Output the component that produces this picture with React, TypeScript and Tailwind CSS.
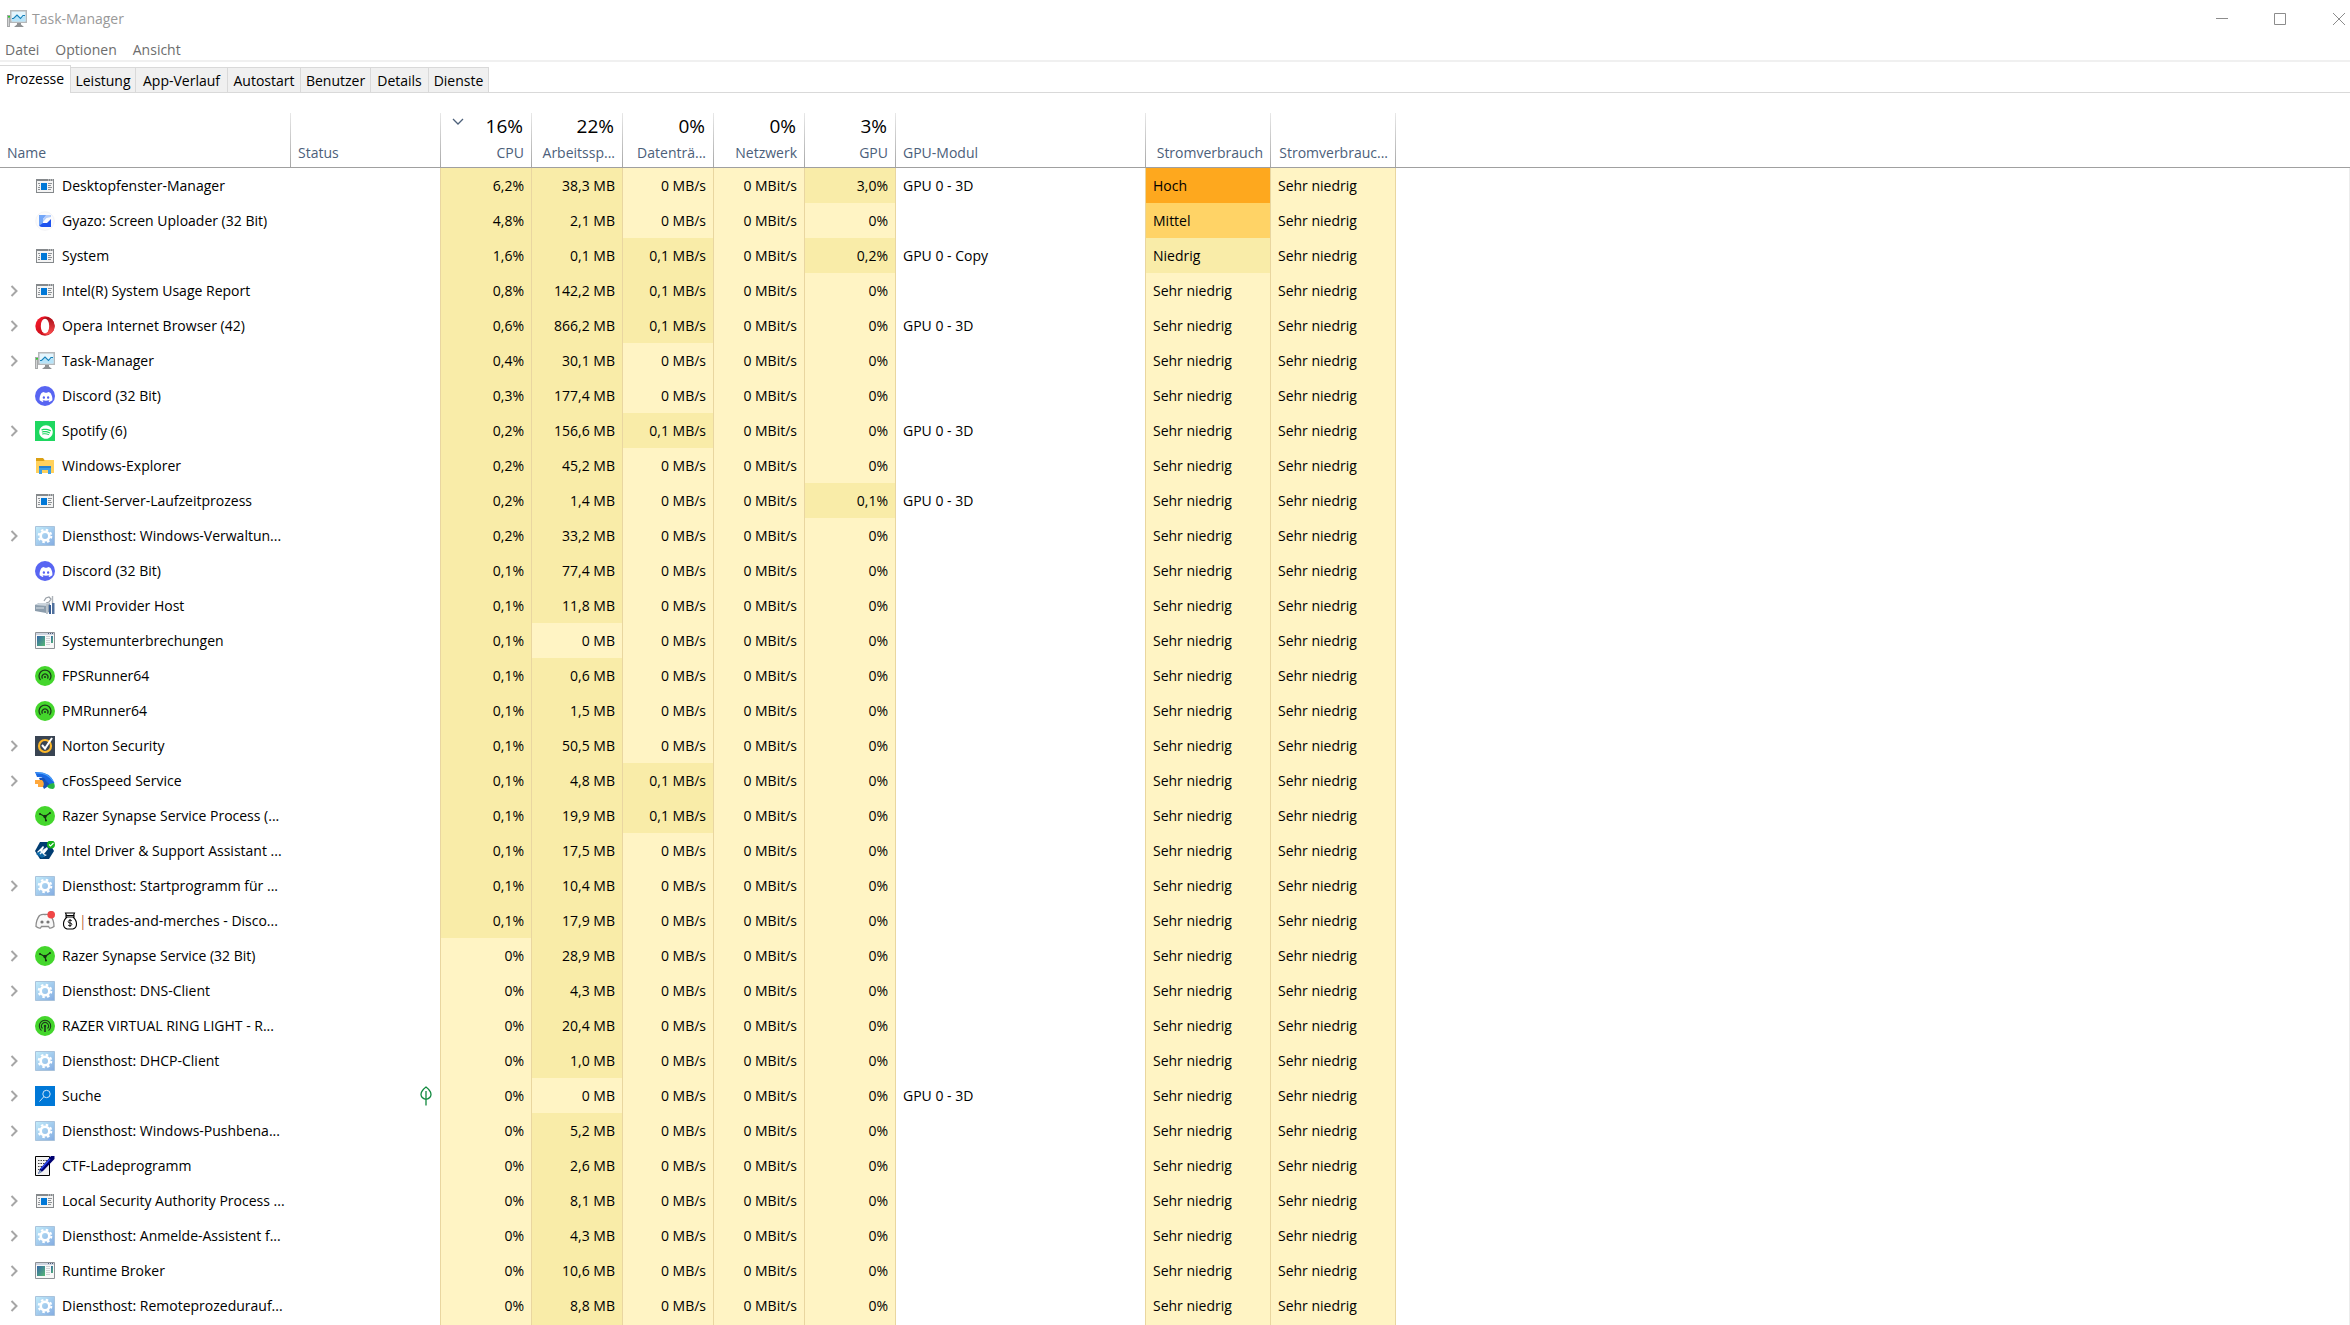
import type { ReactNode } from "react"
import { clsx } from "clsx"
import { FaDiscord, FaSpotify } from "react-icons/fa"

type IconName =
    | "window" | "gyazo" | "opera" | "taskmgr" | "discord" | "spotify" | "explorer" | "service" | "wmi"
    | "program" | "runner" | "norton" | "cfos" | "razer" | "intel" | "discordTray" | "ring" | "search" | "ctf"

type Process = {
    icon: IconName
    name: string
    cpu: string
    memory: string
    disk?: string
    gpu?: string
    engine?: string
    power?: string
    expandable?: boolean
    suspended?: boolean
    moneyBag?: boolean
}

const menus = ["Datei", "Optionen", "Ansicht"]

const tabs = [
    { label: "Leistung", width: "w-[65px]" },
    { label: "App-Verlauf", width: "w-[92px]" },
    { label: "Autostart", width: "w-[73px]" },
    { label: "Benutzer", width: "w-[70px]" },
    { label: "Details", width: "w-[58px]" },
    { label: "Dienste", width: "w-[60px]" },
]

const columns = [
    { label: "Name", width: "w-[291px]" },
    { label: "Status", width: "w-[150px]" },
    { label: "CPU", total: "16%", width: "w-[91px]", right: true, sorted: true },
    { label: "Arbeitssp...", total: "22%", width: "w-[91px]", right: true },
    { label: "Datenträ...", total: "0%", width: "w-[91px]", right: true },
    { label: "Netzwerk", total: "0%", width: "w-[91px]", right: true },
    { label: "GPU", total: "3%", width: "w-[91px]", right: true },
    { label: "GPU-Modul", width: "w-[250px]" },
    { label: "Stromverbrauch", width: "w-[125px]", right: true },
    { label: "Stromverbrauc...", width: "w-[125px]", right: true },
]

const processes: Process[] = [
    { icon: "window", name: "Desktopfenster-Manager", cpu: "6,2%", memory: "38,3 MB", gpu: "3,0%", engine: "GPU 0 - 3D", power: "Hoch" },
    { icon: "gyazo", name: "Gyazo: Screen Uploader (32 Bit)", cpu: "4,8%", memory: "2,1 MB", power: "Mittel" },
    { icon: "window", name: "System", cpu: "1,6%", memory: "0,1 MB", disk: "0,1 MB/s", gpu: "0,2%", engine: "GPU 0 - Copy", power: "Niedrig" },
    { icon: "window", name: "Intel(R) System Usage Report", cpu: "0,8%", memory: "142,2 MB", disk: "0,1 MB/s", expandable: true },
    { icon: "opera", name: "Opera Internet Browser (42)", cpu: "0,6%", memory: "866,2 MB", disk: "0,1 MB/s", engine: "GPU 0 - 3D", expandable: true },
    { icon: "taskmgr", name: "Task-Manager", cpu: "0,4%", memory: "30,1 MB", expandable: true },
    { icon: "discord", name: "Discord (32 Bit)", cpu: "0,3%", memory: "177,4 MB" },
    { icon: "spotify", name: "Spotify (6)", cpu: "0,2%", memory: "156,6 MB", disk: "0,1 MB/s", engine: "GPU 0 - 3D", expandable: true },
    { icon: "explorer", name: "Windows-Explorer", cpu: "0,2%", memory: "45,2 MB" },
    { icon: "window", name: "Client-Server-Laufzeitprozess", cpu: "0,2%", memory: "1,4 MB", gpu: "0,1%", engine: "GPU 0 - 3D" },
    { icon: "service", name: "Diensthost: Windows-Verwaltun...", cpu: "0,2%", memory: "33,2 MB", expandable: true },
    { icon: "discord", name: "Discord (32 Bit)", cpu: "0,1%", memory: "77,4 MB" },
    { icon: "wmi", name: "WMI Provider Host", cpu: "0,1%", memory: "11,8 MB" },
    { icon: "program", name: "Systemunterbrechungen", cpu: "0,1%", memory: "0 MB" },
    { icon: "runner", name: "FPSRunner64", cpu: "0,1%", memory: "0,6 MB" },
    { icon: "runner", name: "PMRunner64", cpu: "0,1%", memory: "1,5 MB" },
    { icon: "norton", name: "Norton Security", cpu: "0,1%", memory: "50,5 MB", expandable: true },
    { icon: "cfos", name: "cFosSpeed Service", cpu: "0,1%", memory: "4,8 MB", disk: "0,1 MB/s", expandable: true },
    { icon: "razer", name: "Razer Synapse Service Process (...", cpu: "0,1%", memory: "19,9 MB", disk: "0,1 MB/s" },
    { icon: "intel", name: "Intel Driver & Support Assistant ...", cpu: "0,1%", memory: "17,5 MB" },
    { icon: "service", name: "Diensthost: Startprogramm für ...", cpu: "0,1%", memory: "10,4 MB", expandable: true },
    { icon: "discordTray", name: "trades-and-merches - Disco...", cpu: "0,1%", memory: "17,9 MB", moneyBag: true },
    { icon: "razer", name: "Razer Synapse Service (32 Bit)", cpu: "0%", memory: "28,9 MB", expandable: true },
    { icon: "service", name: "Diensthost: DNS-Client", cpu: "0%", memory: "4,3 MB", expandable: true },
    { icon: "ring", name: "RAZER VIRTUAL RING LIGHT - R...", cpu: "0%", memory: "20,4 MB" },
    { icon: "service", name: "Diensthost: DHCP-Client", cpu: "0%", memory: "1,0 MB", expandable: true },
    { icon: "search", name: "Suche", cpu: "0%", memory: "0 MB", engine: "GPU 0 - 3D", expandable: true, suspended: true },
    { icon: "service", name: "Diensthost: Windows-Pushbena...", cpu: "0%", memory: "5,2 MB", expandable: true },
    { icon: "ctf", name: "CTF-Ladeprogramm", cpu: "0%", memory: "2,6 MB" },
    { icon: "window", name: "Local Security Authority Process ...", cpu: "0%", memory: "8,1 MB", expandable: true },
    { icon: "service", name: "Diensthost: Anmelde-Assistent f...", cpu: "0%", memory: "4,3 MB", expandable: true },
    { icon: "program", name: "Runtime Broker", cpu: "0%", memory: "10,6 MB", expandable: true },
    { icon: "service", name: "Diensthost: Remoteprozedurauf...", cpu: "0%", memory: "8,8 MB", expandable: true },
]

const powerColors: Record<string, string> = {
    "Hoch": "bg-[#fea81e]",
    "Mittel": "bg-[#ffd366]",
    "Niedrig": "bg-[#f9eca8]",
    "Sehr niedrig": "bg-[#fff4c4]",
}

// values starting at zero get the pale tint
const heat = (value: string) => (/^0( |%)/.test(value) ? "bg-[#fff4c4]" : "bg-[#f9eca8]")

const iconDrawings: Record<IconName, ReactNode> = {
    window: (
        <>
            <path d="M1 3h18v14H1z" fill="#85898c" />
            <path d="M2 5h16v11H2z" fill="#f4f4f4" />
            <path d="M13 4h1M15 4h1M17 4h1" stroke="#e8e8e8" />
            <path d="M3 7.5h2M4 9.5h1M3 11.5h2M3 13.5h2M13 7.5h4M13 9.5h3M13 11.5h4M13 13.5h3" stroke="#8e9295" />
            <path d="M6 7h6v7H6z" fill="#0078d7" />
        </>
    ),
    gyazo: (
        <>
            <circle cx="10" cy="10" r="9.3" fill="#fbfbfc" stroke="#efeff2" strokeWidth=".7" />
            <path d="M4 4h7L8 7.500v4.500h4l4-4v8H7q-3 0-3-3z" fill="#1d52ee" />
            <path d="M4 4h7L8 7.500v4.500l-3.500 2.500Q4 14 4 13z" fill="#72a6f8" />
            <path d="M11 4h5v2l-4.500 1L8 11V7.500z" fill="#b4cdfb" />
        </>
    ),
    opera: (
        <>
            <defs>
                <linearGradient id="opera-red" x1="0" x2="1" y1="0" y2="1">
                    <stop offset="0" stopColor="#ff1b2d" />
                    <stop offset=".5" stopColor="#d5121f" />
                    <stop offset="1" stopColor="#b5101c" />
                </linearGradient>
                <linearGradient id="opera-side" x1="0" x2="0" y1="0" y2="1">
                    <stop offset="0" stopColor="#a50d18" />
                    <stop offset="1" stopColor="#ff5050" />
                </linearGradient>
            </defs>
            <circle cx="10" cy="10" r="9.700" fill="url(#opera-red)" />
            <path d="M7 3Q12-.5 16.500 3Q19.700 6 19.700 10T16.500 17Q12 20.500 7 17Q13 17 13.500 10T7 3z" fill="url(#opera-side)" />
            <ellipse cx="10" cy="10" rx="4.200" ry="7.300" fill="#fff" />
        </>
    ),
    taskmgr: (
        <>
            <path d="M0 6h3v12H0z" fill="#a6a8a9" />
            <path d="M1 7h2v1.500H1z" fill="#2fce2f" />
            <path d="M1 9h1v8H1z" fill="#d2d4d5" />
            <path d="M3 1h17v13H3z" fill="#b5b8ba" />
            <path d="M4.500 2.500h14v10h-14z" fill="#e3f5fd" />
            <path d="M5 10l2-1 3-3 3.500 3.500L18.500 6v6.500H5z" fill="#b7e3f8" />
            <path d="M5 9.500h1.500L10 6l3.500 3.500L16 6.500h2" fill="none" stroke="#1480bb" strokeWidth="1.100" />
            <path d="M10 14h4v1.500l3 2.500H7l3-2.500z" fill="#8f9294" />
        </>
    ),
    discord: (
        <>
            <circle cx="10" cy="10" r="10" fill="#5865f2" />
            <FaDiscord x="4" y="4" width="12" height="12" color="#fff" />
        </>
    ),
    spotify: (
        <>
            <path d="M0 0h20v20H0z" fill="#1ed760" />
            <FaSpotify x="4" y="4" width="12" height="12" color="#fff" />
        </>
    ),
    explorer: (
        <>
            <path d="M1 2h7l1.500 2H19v4H1z" fill="#dba012" />
            <path d="M1 5h7.500L10 4h9v13H1z" fill="#ffd15c" />
            <path d="M4 10h12v8h-3v-4H7v4H4z" fill="#3c9ee5" />
            <path d="M4 10h12v2H4z" fill="#2482d0" />
        </>
    ),
    service: (
        <>
            <defs>
                <linearGradient id="service-bg" x1="0" x2="1" y1="0" y2="1">
                    <stop offset="0" stopColor="#c3edfb" />
                    <stop offset="1" stopColor="#83abe1" />
                </linearGradient>
            </defs>
            <path d="M.5.5h19v19H.5z" fill="url(#service-bg)" stroke="#a9c3dc" />
            <circle cx="10" cy="10" r="4.300" fill="none" stroke="#fff" strokeWidth="2.600" />
            <circle cx="10" cy="10" r="6.300" fill="none" stroke="#fff" strokeWidth="2" strokeDasharray="2.500 2.448" />
        </>
    ),
    wmi: (
        <>
            <path d="M9 5l2-3 3-1 2 2-2 3-3 1" fill="none" stroke="#9aa1a8" strokeWidth="1.300" />
            <path d="M17.500 0v8" stroke="#adb3b9" strokeWidth="1.400" />
            <path d="M0 9l4-2h11v9l-4 1L0 15z" fill="#8c9dac" />
            <path d="M0 9l4-2h11l-3 3z" fill="#cbd4dc" />
            <path d="M1 12h8" stroke="#dbe2e8" />
            <path d="M11 8h2v10h-2z" fill="#b9c1c8" />
            <path d="M14 9h2v9h-2z" fill="#395e94" />
            <path d="M17 7h2.500v11H17z" fill="#50709d" />
        </>
    ),
    program: (
        <>
            <defs>
                <linearGradient id="program-fill" x1="0" x2="1" y1="0" y2="1">
                    <stop offset="0" stopColor="#3466a8" />
                    <stop offset="1" stopColor="#57b874" />
                </linearGradient>
            </defs>
            <path d="M.5 1.500h19v16H.5z" fill="#f8f8f8" stroke="#8d9196" />
            <path d="M1 2h18v2H1z" fill="#cfd5e0" />
            <path d="M13 2.500h1M15 2.500h1M17 2.500h1" stroke="#4c5b78" />
            <path d="M2 5h8v10H2z" fill="url(#program-fill)" />
            <path d="M11 5.500h4M11 7.500h4M11 9.500h4M11 11.500h4M11 13.500h4" stroke="#cfd1d4" />
            <path d="M16 5h2v7h-2z" fill="url(#program-fill)" />
        </>
    ),
    runner: (
        <>
            <circle cx="10" cy="10" r="10" fill="#44d62c" />
            <path d="M5.500 14A6 6 0 1 1 14.500 14" fill="none" stroke="#1c3a1a" strokeWidth="1.300" />
            <path d="M7.500 12.700A3 3 0 1 1 12.500 12.700" fill="none" stroke="#1c3a1a" strokeWidth="1.200" />
            <circle cx="10" cy="11" r="1.100" fill="#1c3a1a" />
        </>
    ),
    norton: (
        <>
            <path d="M0 0h20v20H0z" fill="#394452" />
            <circle cx="10" cy="10" r="6" fill="none" stroke="#fbb72a" strokeWidth="2.200" />
            <path d="M7 9l3 3.500L17 2" fill="none" stroke="#fff" strokeWidth="2" />
        </>
    ),
    cfos: (
        <>
            <path d="M0 1Q15 0 19.500 12L14 15Q10 5 2 6z" fill="#1968e2" />
            <path d="M1 2Q12 1 18 10" fill="none" stroke="#49a0fb" strokeWidth="1.200" />
            <path d="M4 7h5l6 7-6 4z" fill="#1851b8" />
            <path d="M0 9h7q3 3 1 7H3V13H0z" fill="#ffa83c" />
            <path d="M19 12q2 5-1 6-5 0-6-3 3-3 7-3z" fill="#27b543" />
        </>
    ),
    razer: (
        <>
            <circle cx="10" cy="10" r="10" fill="#44d62c" />
            <path d="M5 8l5 2.500L15 7M10 10.500L11 15" fill="none" stroke="#173014" strokeWidth="1.300" />
            <circle cx="5" cy="8" r="1" fill="#173014" />
            <circle cx="15" cy="7" r="1" fill="#173014" />
            <circle cx="11" cy="14.500" r="1" fill="#173014" />
            <circle cx="10" cy="10.500" r="1.700" fill="#173014" />
        </>
    ),
    intel: (
        <>
            <path d="M5 1h9l5 9-5 8H5L0 10z" fill="#003c71" />
            <path d="M2 11L8 5l1 1-2 4 5-4 1 2-4 5 3 1-4 2z" fill="#fff" />
            <path d="M1 13l4-3 5 5-3 2z" fill="#0b67a6" />
            <path d="M5 13l5-5" stroke="#e8f3fb" strokeWidth="1.500" />
            <circle cx="16" cy="3.500" r="4" fill="#16b31c" />
            <path d="M14 3.500l1.500 1.500L18.500 2" fill="none" stroke="#fff" strokeWidth="1.100" />
        </>
    ),
    discordTray: (
        <>
            <path d="M4.500 4.500Q7 3 10 3.500 13 3 15.500 4.500 19 9 19 15.500 16.500 17.500 14.500 17L13.500 15.500H6.500L5.500 17Q3.500 17.500 1 15.500 1 9 4.500 4.500z" fill="#f8f8f8" stroke="#8b8b8b" strokeWidth="1.300" />
            <circle cx="7" cy="11" r="1.600" fill="#777" />
            <circle cx="13" cy="11" r="1.600" fill="#777" />
            <circle cx="16.200" cy="3.700" r="3.800" fill="#f04747" />
        </>
    ),
    ring: (
        <>
            <circle cx="10" cy="10" r="10" fill="#44d62c" />
            <path d="M6.500 14.500A5.700 5.700 0 1 1 13.500 14.500" fill="none" stroke="#1c3a1a" strokeWidth="1.100" />
            <path d="M7.500 12.500A3.500 3.500 0 1 1 12.500 12.500" fill="none" stroke="#1c3a1a" strokeWidth="1.100" />
            <circle cx="10" cy="10" r="1.300" fill="#1c3a1a" />
            <path d="M9.200 11h1.600v5H9.200z" fill="#1c3a1a" />
        </>
    ),
    search: (
        <>
            <path d="M0 0h20v20H0z" fill="#0078d7" />
            <circle cx="11.500" cy="8" r="3.700" fill="none" stroke="#cfe5f8" />
            <path d="M9 10.500L4.500 15.500" stroke="#cfe5f8" />
        </>
    ),
    ctf: (
        <>
            <path d="M.5.5h14v19H.5z" fill="#f2f2f2" stroke="#000" />
            <path d="M3 4.500h10M3 7.500h8M3 10.500h6M3 13.500h3" stroke="#444" strokeDasharray="1.500 1" />
            <path d="M16 0h3.500v3L8 15l-5 3 2-5z" fill="#000070" />
            <path d="M15 3L6 13" stroke="#2a47ee" strokeWidth="1.400" />
            <path d="M3 18l2-4 2 2z" fill="#88a8c0" />
        </>
    ),
}

const AppIcon = ({ name }: { name: IconName }) => (
    <svg viewBox="0 0 20 20" className="size-5 shrink-0" aria-hidden="true">{iconDrawings[name]}</svg>
)

const MoneyBag = () => (
    <svg viewBox="0 0 16 18" className="h-[18px] w-4" fill="none" stroke="#000" role="img" aria-label="Geldsack">
        <path d="M4.500 3.500L3.500 1h9l-1 2.500M4 3.500h8v1.500H4zM5 5Q1.500 8 1.500 12T5 17h6q3.500-1 3.500-5T11 5" strokeWidth="1.100" />
        <path d="M10 9Q9.500 8.200 8 8.200T6.200 9.500 8 11t1.800 1.500T8 13.800 6 13M8 7v8" strokeWidth=".900" />
    </svg>
)

const TitleBar = () => (
    <header className="flex h-[37px] items-center justify-between pl-[7px]">
        <div className="flex items-center gap-[5px]">
            <AppIcon name="taskmgr" />
            <h1 className="text-[14px] text-[#999999]">Task-Manager</h1>
        </div>
        <div className="flex text-[#8c8c8c]">
            <button aria-label="Minimieren" className="flex h-9 w-[58px] items-center justify-center">
                <svg viewBox="0 0 12 12" className="size-3"><path d="M0 5.500h12" stroke="currentColor" /></svg>
            </button>
            <button aria-label="Maximieren" className="flex h-9 w-[58px] items-center justify-center">
                <svg viewBox="0 0 12 12" className="size-3"><path d="M.5.5h11v11H.5z" fill="none" stroke="currentColor" /></svg>
            </button>
            <button aria-label="Schließen" className="flex h-9 w-[41px] items-center justify-end pr-[5px]">
                <svg viewBox="0 0 12 12" className="size-3"><path d="M0 0l12 12M12 0L0 12" stroke="currentColor" /></svg>
            </button>
        </div>
    </header>
)

const ProcessRow = ({ process }: { process: Process }) => {
    const { disk = "0 MB/s", gpu = "0%", engine, power = "Sehr niedrig" } = process
    const values = [process.cpu, process.memory, disk, "0 MBit/s", gpu]

    return (
        <tr className="h-[35px]">
            <td>
                <div className="flex items-center pl-2">
                    <div className="flex w-[27px]">
                        {process.expandable && (
                            <button aria-label={`${process.name} erweitern`} className="flex h-5 w-3 items-center justify-center">
                                <svg viewBox="0 0 8 12" className="h-3 w-2"><path d="M1.500 1l5 5-5 5" fill="none" stroke="#a6a6a6" strokeWidth="2" /></svg>
                            </button>
                        )}
                    </div>
                    <AppIcon name={process.icon} />
                    <span className="ml-[7px] flex items-center">
                        {process.moneyBag && <><MoneyBag /><span className="px-px text-[#c0683c]">|</span></>}
                        {process.name}
                    </span>
                </div>
            </td>
            <td className="border-r border-[#e9d6a0] pr-2">
                {process.suspended && (
                    <svg viewBox="0 0 12 20" className="ml-auto h-5 w-3" fill="none" stroke="#10893e" strokeWidth="1.300" role="img" aria-label="Angehalten">
                        <path d="M6 1Q1 5 1 8.500T6 13.500Q11 12 11 8.500T6 1zM6 5v14.500" />
                    </svg>
                )}
            </td>
            {values.map((value, index) => (
                <td key={index} className={clsx("border-r border-[#e9d6a0] pr-[7px] text-right", heat(value))}>{value}</td>
            ))}
            <td className="border-r border-[#e9d6a0] pl-[7px]">{engine}</td>
            <td className={clsx("border-r border-[#e9d6a0] pl-[7px]", powerColors[power])}>{power}</td>
            <td className="border-r border-[#e9d6a0] bg-[#fff4c4] pl-[7px]">Sehr niedrig</td>
            <td className="border-r border-[#ececec]"></td>
        </tr>
    )
}

export default function App() {
    return (
        <main className="min-h-screen overflow-hidden bg-white font-['Open_Sans',sans-serif] text-[14px] leading-5 text-black">
            <TitleBar />
            <nav className="flex h-[25px] items-end gap-4 border-b-2 border-[#f0f0f0] pl-[5px] text-[#6d6d6d]">
                {menus.map(menu => <button key={menu}>{menu}</button>)}
            </nav>
            <div role="tablist" className="mt-[3px] flex h-7 items-end border-b border-[#d9d9d9]">
                <button role="tab" aria-selected="true" className="-mb-px h-7 w-[71px] border-t border-r border-[#d9d9d9] bg-white pb-px">Prozesse</button>
                {tabs.map(tab => (
                    <button key={tab.label} role="tab" aria-selected="false" className={clsx("h-[25px] border-t border-r border-[#d9d9d9] bg-[#f0f0f0] pt-px", tab.width)}>
                        {tab.label}
                    </button>
                ))}
            </div>

            <table className="mt-5 w-full table-fixed border-separate border-spacing-0 whitespace-nowrap">
                <thead>
                    <tr className="h-[55px] text-[#4c607a]">
                        {columns.map((column, index) => (
                            <th
                                key={index}
                                scope="col"
                                aria-sort={column.sorted ? "descending" : undefined}
                                className={clsx(
                                    "border-b border-[#a0a0a0] bg-[linear-gradient(#e8e8e8,#a6a6a6)] bg-[length:1px_100%] bg-right bg-no-repeat pb-1 align-bottom font-normal",
                                    column.width,
                                    column.right ? "pr-2 text-right" : "pl-[7px] text-left",
                                )}
                            >
                                {column.total && (
                                    <div className="flex h-[29px] items-start justify-between pr-px pl-[11px]">
                                        <span>
                                            {column.sorted && <svg viewBox="0 0 12 8" className="mt-1 h-2 w-3"><path d="M1 1l5 5 5-5" fill="none" stroke="#4c607a" strokeWidth="1.300" /></svg>}
                                        </span>
                                        <span className="text-[19px] leading-6 text-black">{column.total}</span>
                                    </div>
                                )}
                                {column.label}
                            </th>
                        ))}
                        <th className="border-b border-[#a0a0a0]"></th>
                    </tr>
                </thead>
                <tbody>
                    {processes.map((process, index) => <ProcessRow key={index} process={process} />)}
                </tbody>
                <tfoot aria-hidden="true">
                    {/* colours run on to the window edge */}
                    <tr className="h-0.5">
                        <td className="p-0"></td>
                        <td className="border-r border-[#e9d6a0] p-0"></td>
                        <td className="border-r border-[#e9d6a0] bg-[#fff4c4] p-0"></td>
                        <td className="border-r border-[#e9d6a0] bg-[#f9eca8] p-0"></td>
                        <td className="border-r border-[#e9d6a0] bg-[#fff4c4] p-0"></td>
                        <td className="border-r border-[#e9d6a0] bg-[#fff4c4] p-0"></td>
                        <td className="border-r border-[#e9d6a0] bg-[#fff4c4] p-0"></td>
                        <td className="border-r border-[#e9d6a0] p-0"></td>
                        <td className="border-r border-[#e9d6a0] bg-[#fff4c4] p-0"></td>
                        <td className="border-r border-[#e9d6a0] bg-[#fff4c4] p-0"></td>
                        <td className="border-r border-[#ececec] p-0"></td>
                    </tr>
                </tfoot>
            </table>
        </main>
    )
}
